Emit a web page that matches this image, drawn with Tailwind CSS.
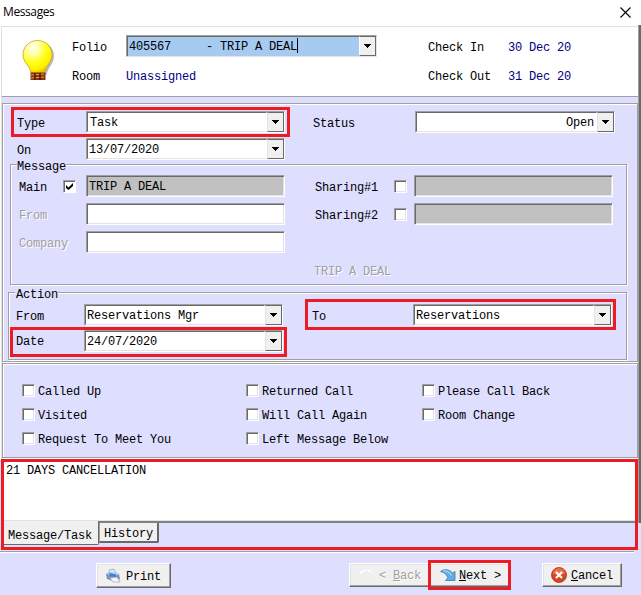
<!DOCTYPE html>
<html lang="en">
<head>
<meta charset="utf-8">
<title>Messages</title>
<script src="https://cdn.jsdelivr.net/npm/@tailwindcss/browser@4"></script>
</head>
<body class="overflow-hidden bg-white">
<svg class="hidden">
  <symbol id="arrow" viewBox="0 0 7 4"><path d="M0 0H7V1H6V2H5V3H4V4H3V3H2V2H1V1H0Z" fill="#000"/></symbol>
</svg>
<main class="relative flex h-[595px] w-[641px] flex-col overflow-hidden bg-[#dedeff] font-['Liberation_Mono',monospace] text-[12px] leading-[14px] tracking-[-0.2px] whitespace-nowrap text-black">

  <!-- Title bar -->
  <header class="flex h-[26px] shrink-0 items-center justify-between bg-white pr-[10px] pl-[3px] font-['Open_Sans',sans-serif] text-[12px]">
    <span class="-mt-[2px] tracking-[-0.4px]">Messages</span>
    <svg class="-mt-[1px] size-[11px]" viewBox="0 0 11 11"><path d="M.5 .5l10 10M10.5 .5l-10 10" stroke="#000" stroke-width="1.1"/></svg>
  </header>

  <!-- Guest header -->
  <section class="ml-[1px] flex h-[71px] w-[638px] shrink-0 border-t border-b border-l border-t-[#e0e0e0] border-b-[#a0a0a0] border-l-[#e0e0e0] bg-white">
    <svg class="mt-[11px] ml-[19px] h-[44px] w-[36px] shrink-0" viewBox="0 0 36 44">
      <defs><radialGradient id="bulb" cx=".35" cy=".22" r=".8"><stop offset="0" stop-color="#fffff4"/><stop offset=".3" stop-color="#ffffa0"/><stop offset=".6" stop-color="#ffff10"/><stop offset=".85" stop-color="#fff000"/><stop offset="1" stop-color="#e8c000"/></radialGradient></defs>
      <path d="M18 4C27 4 33 10 33 18C33 26 27 29 25.500 37H13C11 29 3.500 26 3.500 18C3.500 10 9 4 18 4Z" fill="#777" opacity=".5"/>
      <path d="M16.500 2.500C25 2.500 31 9 31 16.500C31 25 25 27 23.500 35H10C9 27 2 25 2 16.500C2 9 8 2.500 16.500 2.500Z" fill="url(#bulb)" stroke="#c9a020" stroke-width=".8"/>
      <path d="M9.500 34.500H24.500V42H9.500Z" fill="#8b3412"/><path d="M10 37l13-1M10 40l13-1" stroke="#e0a040" stroke-width="1.200"/><path d="M14 35v7M19 35v7" stroke="#4c1408" stroke-width="1.500"/>
    </svg>
    <div class="ml-[15px] flex flex-col">
      <div class="mt-[8px] flex h-[22px] items-center">
        <span class="mt-[3px] w-[54px]">Folio</span>
        <div class="flex h-[22px] w-[251px] border border-t-[#a0a0a0] border-r-[#e3e3e3] border-b-[#e3e3e3] border-l-[#a0a0a0]">
          <div class="flex flex-1 border-t border-l border-[#696969] bg-[#a6caf0] pl-[1px]"><span class="mt-[3px] whitespace-pre">405567     - TRIP A DEAL</span><i class="mt-[1px] h-[15px] w-px bg-black"></i></div>
          <div class="flex w-[17px] items-center justify-center border border-t-[#696969] border-r-[#696969] border-b-[#696969] border-l-white bg-[#f0f0f0]"><svg class="h-[4px] w-[7px]"><use href="#arrow"/></svg></div>
        </div>
      </div>
      <div class="mt-[13px] flex"><span class="w-[54px]">Room</span><span class="text-[#000080]">Unassigned</span></div>
    </div>
    <div class="mt-[14px] ml-[51px] grid h-fit grid-cols-[80px_auto] gap-y-[15px]">
      <span>Check In</span><span class="text-[#000080]">30 Dec 20</span>
      <span>Check Out</span><span class="text-[#000080]">31 Dec 20</span>
    </div>
  </section>

  <!-- Message details -->
  <section class="mt-[6px] ml-[2px] h-[259px] w-[636px] shrink-0 border border-[#a0a0a0] pt-[7px] shadow-[1px_1px_0_#fff,inset_1px_1px_0_#fff]">
    <div class="flex h-[22px] items-center pl-[14px]">
      <span class="mt-[3px] w-[69px]">Type</span>
      <div class="flex h-[22px] w-[199px] border border-t-[#a0a0a0] border-r-white border-b-white border-l-[#a0a0a0]">
        <div class="flex-1 border border-[#696969] border-r-white border-b-[#e3e3e3] bg-white pt-[3px] pl-[2px]">Task</div>
        <div class="flex w-[17px] items-center justify-center border border-t-[#696969] border-r-[#696969] border-b-[#696969] border-l-[#e3e3e3] bg-[#f0f0f0]"><svg class="h-[4px] w-[7px]"><use href="#arrow"/></svg></div>
      </div>
      <span class="mt-[3px] ml-[28px] w-[102px]">Status</span>
      <div class="flex h-[22px] w-[200px] border border-t-[#a0a0a0] border-r-white border-b-white border-l-[#a0a0a0]">
        <div class="flex-1 border border-[#696969] border-r-white border-b-[#e3e3e3] bg-white pt-[3px] pr-[2px] text-right">Open</div>
        <div class="flex w-[17px] items-center justify-center border border-t-[#696969] border-r-[#696969] border-b-[#696969] border-l-[#e3e3e3] bg-[#f0f0f0]"><svg class="h-[4px] w-[7px]"><use href="#arrow"/></svg></div>
      </div>
    </div>
    <div class="mt-[5px] flex h-[22px] items-center pl-[14px]">
      <span class="mt-[3px] w-[69px]">On</span>
      <div class="flex h-[22px] w-[199px] border border-t-[#a0a0a0] border-r-white border-b-white border-l-[#a0a0a0]">
        <div class="flex-1 border border-[#696969] border-r-white border-b-[#e3e3e3] bg-white pt-[3px] pl-[1px]">13/07/2020</div>
        <div class="flex w-[17px] items-center justify-center border border-t-[#696969] border-r-[#696969] border-b-[#696969] border-l-[#e3e3e3] bg-[#f0f0f0]"><svg class="h-[4px] w-[7px]"><use href="#arrow"/></svg></div>
      </div>
    </div>

    <div class="mt-[4px] ml-[7px] h-[121px] w-[617px] border border-[#a0a0a0] shadow-[1px_1px_0_#fff,inset_1px_1px_0_#fff]">
      <div class="-mt-[6px] ml-[6px] h-[16px] w-fit bg-[#dedeff] pt-[1px]">Message</div>
      <div class="flex h-[22px] items-center pl-[8px]">
        <span class="mt-[3px] w-[44px]">Main</span>
        <i class="flex size-[13px] items-center justify-center border border-t-[#a0a0a0] border-r-white border-b-white border-l-[#a0a0a0] bg-white shadow-[inset_1px_1px_0_#696969]"><svg class="size-[9px]" viewBox="0 0 9 9"><path d="M1 3L3.500 5.500L8 1V4L3.500 8L1 6Z" fill="#000"/></svg></i>
        <div class="ml-[10px] h-[22px] w-[199px] border border-t-[#a0a0a0] border-r-white border-b-white border-l-[#a0a0a0] bg-[#c0c0c0] pt-[4px] pl-[2px] shadow-[inset_1px_1px_0_#696969,inset_-1px_-1px_0_#e3e3e3]">TRIP A DEAL</div>
        <span class="mt-[3px] ml-[30px] w-[79px]">Sharing#1</span>
        <i class="size-[13px] border border-t-[#a0a0a0] border-r-white border-b-white border-l-[#a0a0a0] bg-white shadow-[inset_1px_1px_0_#696969,inset_-1px_-1px_0_#e3e3e3]"></i>
        <div class="ml-[7px] h-[22px] w-[199px] border border-t-[#a0a0a0] border-r-white border-b-white border-l-[#a0a0a0] bg-[#c0c0c0] shadow-[inset_1px_1px_0_#696969,inset_-1px_-1px_0_#e3e3e3]"></div>
      </div>
      <div class="mt-[6px] flex h-[22px] items-center pl-[8px]">
        <span class="mt-[3px] w-[67px] text-[#a0a0a0] [text-shadow:1px_1px_0_#fff]">From</span>
        <div class="h-[22px] w-[199px] border border-t-[#a0a0a0] border-r-white border-b-white border-l-[#a0a0a0] bg-white shadow-[inset_1px_1px_0_#696969,inset_-1px_-1px_0_#e3e3e3]"></div>
        <span class="mt-[3px] ml-[30px] w-[79px]">Sharing#2</span>
        <i class="size-[13px] border border-t-[#a0a0a0] border-r-white border-b-white border-l-[#a0a0a0] bg-white shadow-[inset_1px_1px_0_#696969,inset_-1px_-1px_0_#e3e3e3]"></i>
        <div class="ml-[7px] h-[22px] w-[199px] border border-t-[#a0a0a0] border-r-white border-b-white border-l-[#a0a0a0] bg-[#c0c0c0] shadow-[inset_1px_1px_0_#696969,inset_-1px_-1px_0_#e3e3e3]"></div>
      </div>
      <div class="mt-[6px] flex h-[22px] items-center pl-[8px]">
        <span class="mt-[3px] w-[67px] text-[#a0a0a0] [text-shadow:1px_1px_0_#fff]">Company</span>
        <div class="h-[22px] w-[199px] border border-t-[#a0a0a0] border-r-white border-b-white border-l-[#a0a0a0] bg-white shadow-[inset_1px_1px_0_#696969,inset_-1px_-1px_0_#e3e3e3]"></div>
      </div>
      <div class="mt-[12px] pl-[303px] text-[#a0a0a0] [text-shadow:1px_1px_0_#fff]">TRIP A DEAL</div>
    </div>

    <div class="mt-[7px] ml-[5px] h-[68px] w-[619px] border border-[#a0a0a0] shadow-[1px_1px_0_#fff,inset_1px_1px_0_#fff]">
      <div class="-mt-[5px] ml-[6px] h-[16px] w-fit bg-[#dedeff] pl-[1px]">Action</div>
      <div class="flex h-[22px] items-center pl-[7px]">
        <span class="mt-[3px] w-[68px]">From</span>
        <div class="flex h-[22px] w-[199px] border border-t-[#a0a0a0] border-r-white border-b-white border-l-[#a0a0a0]">
          <div class="flex-1 border border-[#696969] border-r-white border-b-[#e3e3e3] bg-white pt-[3px] pl-[1px]">Reservations Mgr</div>
          <div class="flex w-[17px] items-center justify-center border border-t-[#696969] border-r-[#696969] border-b-[#696969] border-l-[#e3e3e3] bg-[#f0f0f0]"><svg class="h-[4px] w-[7px]"><use href="#arrow"/></svg></div>
        </div>
        <span class="mt-[3px] ml-[29px] w-[101px]">To</span>
        <div class="flex h-[22px] w-[199px] border border-t-[#a0a0a0] border-r-white border-b-white border-l-[#a0a0a0]">
          <div class="flex-1 border border-[#696969] border-r-white border-b-[#e3e3e3] bg-white pt-[3px] pl-[1px]">Reservations</div>
          <div class="flex w-[17px] items-center justify-center border border-t-[#696969] border-r-[#696969] border-b-[#696969] border-l-[#e3e3e3] bg-[#f0f0f0]"><svg class="h-[4px] w-[7px]"><use href="#arrow"/></svg></div>
        </div>
      </div>
      <div class="mt-[4px] flex h-[22px] items-center pl-[7px]">
        <span class="mt-[2px] w-[68px]">Date</span>
        <div class="flex h-[22px] w-[199px] border border-t-[#a0a0a0] border-r-white border-b-white border-l-[#a0a0a0]">
          <div class="flex-1 border border-[#696969] border-r-white border-b-[#e3e3e3] bg-white pt-[3px] pl-[1px]">24/07/2020</div>
          <div class="flex w-[17px] items-center justify-center border border-t-[#696969] border-r-[#696969] border-b-[#696969] border-l-[#e3e3e3] bg-[#f0f0f0]"><svg class="h-[4px] w-[7px]"><use href="#arrow"/></svg></div>
        </div>
      </div>
    </div>
  </section>

  <!-- Call flags -->
  <section class="mt-[1px] ml-[2px] grid h-[95px] w-[636px] shrink-0 grid-cols-[224px_176px_auto] content-start gap-y-[10px] border border-[#a0a0a0] pt-[20px] pl-[19px] shadow-[1px_1px_0_#fff,inset_1px_1px_0_#fff]">
    <label class="flex h-[14px] gap-[3px]"><i class="size-[13px] border border-t-[#a0a0a0] border-r-white border-b-white border-l-[#a0a0a0] bg-white shadow-[inset_1px_1px_0_#696969,inset_-1px_-1px_0_#e3e3e3]"></i><span class="mt-[1px]">Called Up</span></label>
    <label class="flex h-[14px] gap-[3px]"><i class="size-[13px] border border-t-[#a0a0a0] border-r-white border-b-white border-l-[#a0a0a0] bg-white shadow-[inset_1px_1px_0_#696969,inset_-1px_-1px_0_#e3e3e3]"></i><span class="mt-[1px]">Returned Call</span></label>
    <label class="flex h-[14px] gap-[3px]"><i class="size-[13px] border border-t-[#a0a0a0] border-r-white border-b-white border-l-[#a0a0a0] bg-white shadow-[inset_1px_1px_0_#696969,inset_-1px_-1px_0_#e3e3e3]"></i><span class="mt-[1px]">Please Call Back</span></label>
    <label class="flex h-[14px] gap-[3px]"><i class="size-[13px] border border-t-[#a0a0a0] border-r-white border-b-white border-l-[#a0a0a0] bg-white shadow-[inset_1px_1px_0_#696969,inset_-1px_-1px_0_#e3e3e3]"></i><span class="mt-[1px]">Visited</span></label>
    <label class="flex h-[14px] gap-[3px]"><i class="size-[13px] border border-t-[#a0a0a0] border-r-white border-b-white border-l-[#a0a0a0] bg-white shadow-[inset_1px_1px_0_#696969,inset_-1px_-1px_0_#e3e3e3]"></i><span class="mt-[1px]">Will Call Again</span></label>
    <label class="flex h-[14px] gap-[3px]"><i class="size-[13px] border border-t-[#a0a0a0] border-r-white border-b-white border-l-[#a0a0a0] bg-white shadow-[inset_1px_1px_0_#696969,inset_-1px_-1px_0_#e3e3e3]"></i><span class="mt-[1px]">Room Change</span></label>
    <label class="flex h-[14px] gap-[3px]"><i class="size-[13px] border border-t-[#a0a0a0] border-r-white border-b-white border-l-[#a0a0a0] bg-white shadow-[inset_1px_1px_0_#696969,inset_-1px_-1px_0_#e3e3e3]"></i><span class="mt-[1px]">Request To Meet You</span></label>
    <label class="flex h-[14px] gap-[3px]"><i class="size-[13px] border border-t-[#a0a0a0] border-r-white border-b-white border-l-[#a0a0a0] bg-white shadow-[inset_1px_1px_0_#696969,inset_-1px_-1px_0_#e3e3e3]"></i><span class="mt-[1px]">Left Message Below</span></label>
  </section>

  <!-- Message text and tabs -->
  <section class="mt-[1px] ml-[1px] h-[92px] w-[638px] shrink-0">
    <div class="h-[62px] border-b border-[#e3e3e3] bg-white pt-[5px] pl-[5px]">21 DAYS CANCELLATION</div>
    <div class="flex h-[24px]">
      <div class="h-[24px] w-[98px] rounded-br-[2px] border-r border-b border-[#696969] bg-[#f0f0f0] pt-[8px] pl-[7px]">Message/Task</div>
      <div class="flex-1 border-t-2 border-t-[#808080]"><div class="h-[20px] w-[60px] rounded-br-[2px] border-r-2 border-b-2 border-l border-[#696969] border-l-[#a0a0a0] bg-[#f0f0f0] pt-[4px] pl-[4px]">History</div></div>
    </div>
  </section>
  <div class="h-[2px] w-[634px] shrink-0 border-t border-b border-t-[#a0a0a0] border-b-white"></div>

  <!-- Wizard buttons -->
  <footer class="flex h-[42px] items-start pt-[10px] pl-[96px]">
    <button class="flex h-[25px] w-[75px] items-center border border-t-white border-r-[#696969] border-b-[#696969] border-l-white bg-[#f0f0f0] pl-[8px] tracking-[-0.2px] shadow-[inset_-1px_-1px_0_#a0a0a0,inset_1px_1px_0_#e3e3e3]">
      <svg class="size-[16px]" viewBox="0 0 16 16"><path d="M4 2L9 1L11 5L5 6Z" fill="#dbe8f8" stroke="#8aa0c0" stroke-width=".7"/><path d="M1 6L4 4L14 6L15 11L11 14L2 11Z" fill="#7f93b8"/><path d="M1 6L4 4L14 6L11 8Z" fill="#bccae2"/><path d="M4 5L11 6.500L12 9L5 8Z" fill="#2e86d8"/><path d="M5 10L12 9L15 14L8 14Z" fill="#f4f7fd" stroke="#8fa0c4" stroke-width=".6"/></svg>
      <span class="mt-[2px] ml-[5px]">Print</span>
    </button>
    <button class="ml-[178px] flex h-[24px] w-[81px] items-center border border-t-white border-r-[#a0a0a0] border-b-[#696969] border-l-white bg-[#f0f0f0] pl-[8px] tracking-[-0.2px] text-[#a0a0a0] shadow-[inset_0_-1px_0_#a0a0a0,inset_1px_1px_0_#e3e3e3]">
      <svg class="-mt-[4px] h-[10px] w-[16px]" viewBox="0 0 16 10"><path d="M3 5C6 1 10 1 15 5M3 3V7" stroke="#fff" stroke-width="1.500" fill="none" stroke-dasharray="3 1"/></svg>
      <span class="mt-[2px] ml-[5px] [text-shadow:1px_1px_0_#fff]">&lt; <u>B</u>ack</span>
    </button>
    <button class="-ml-[2px] flex h-[24px] w-[82px] items-center border border-t-white border-r-[#696969] border-b-[#696969] border-l-white bg-[#f0f0f0] pl-[11px] tracking-[-0.2px] shadow-[inset_-1px_-1px_0_#a0a0a0,inset_1px_1px_0_#e3e3e3]">
      <svg class="h-[12px] w-[16px]" viewBox="0 0 16 12"><path d="M.5 2.500C3 0 9.500 -.2 12.500 4L15 2.500V11.500H5.500L8 8.800C6.500 7.500 7.500 4.500 .5 2.500Z" fill="#5faee6" stroke="#316f9f" stroke-width=".7"/><path d="M3 2C8 1.500 10 4 11.500 6.500" stroke="#a8d8fa" stroke-width="1.200" fill="none"/></svg>
      <span class="mt-[2px] ml-[3px]"><u>N</u>ext &gt;</span>
    </button>
    <button class="ml-[32px] flex h-[24px] w-[80px] items-center border border-t-white border-r-[#696969] border-b-[#696969] border-l-white bg-[#f0f0f0] pl-[8px] tracking-[-0.2px] shadow-[inset_-1px_-1px_0_#a0a0a0,inset_1px_1px_0_#e3e3e3]">
      <svg class="size-[16px]" viewBox="0 0 16 16"><circle cx="8" cy="8" r="7.500" fill="#d9431f" stroke="#a8361c" stroke-width=".8"/><path d="M2 7A6 6 0 0 1 14 7Q8 9 2 7Z" fill="#f08060" opacity=".7"/><path d="M5 5L11 11M11 5L5 11" stroke="#fff" stroke-width="2.200"/></svg>
      <span class="mt-[2px] ml-[4px]"><u>C</u>ancel</span>
    </button>
  </footer>

  <!-- Window's side edges -->
  <div class="absolute top-[25px] left-[638px] h-[498px] w-[3px] border-r-2 border-l border-r-[#696969] border-l-[#a0a0a0]"></div>
  <div class="absolute top-[26px] left-0 h-[434px] w-[2px] border-r border-r-[#e0e0e0] bg-white"></div>

  <!-- Highlight frames -->
  <div class="absolute top-[107px] left-[11px] h-[30px] w-[279px] border-3 border-[#ed1c24]"></div>
  <div class="absolute top-[299px] left-[305px] h-[31px] w-[311px] border-3 border-[#ed1c24]"></div>
  <div class="absolute top-[327px] left-[10px] h-[30px] w-[277px] border-3 border-[#ed1c24]"></div>
  <div class="absolute top-[459px] left-[1px] h-[91px] w-[637px] border-3 border-[#ed1c24]"></div>
  <div class="absolute top-[560px] left-[428px] h-[30px] w-[83px] border-3 border-[#ed1c24]"></div>
</main>
</body>
</html>
